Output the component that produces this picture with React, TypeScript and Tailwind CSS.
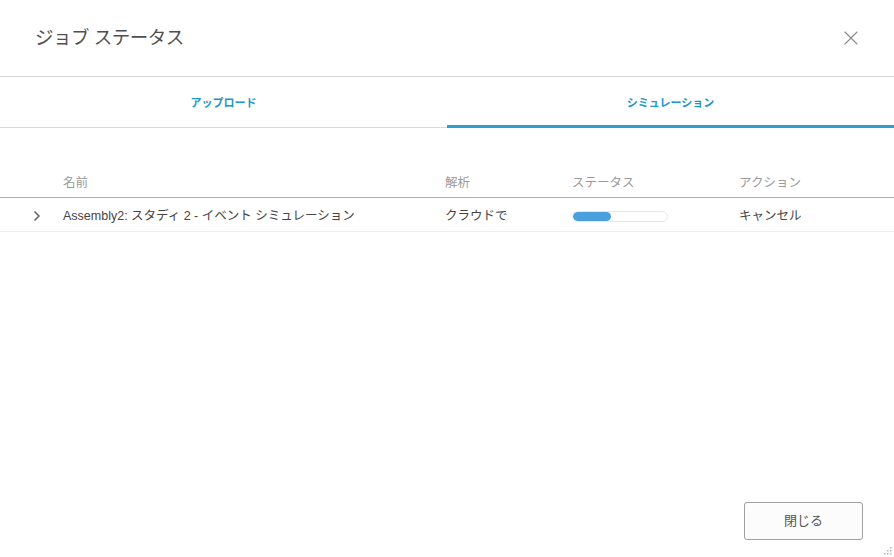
import { X, ChevronRight } from "lucide-react";

const font = { fontFamily: '"Liberation Sans", "Noto Sans CJK JP", sans-serif' };

interface Job {
  name: string;
  analysis: string;
  progress: number;
  action: string;
}

const jobs: Job[] = [
  {
    name: "Assembly2: スタディ 2 - イベント シミュレーション",
    analysis: "クラウドで",
    progress: 40,
    action: "キャンセル",
  },
];

export default function App() {
  return (
    <div className="w-[894px] h-[557px] bg-white flex flex-col relative overflow-hidden" style={font}>
      <div className="h-[77px] flex items-center justify-between pl-[35px] pr-[31px] border-b border-[#d4d4d4]">
        <h1 className="text-[18.5px] text-[#505050] tracking-[-0.5px]">ジョブ ステータス</h1>
        <button className="text-[#8a8a8a]">
          <X className="w-[24px] h-[24px]" strokeWidth={1.1} />
        </button>
      </div>

      <div className="flex h-[51px]">
        <div className="flex-1 flex items-center justify-center border-b border-[#d8d8d8] pt-[3px] text-[11px] font-bold text-[#1b97c9]">
          アップロード
        </div>
        <div className="flex-1 flex items-center justify-center border-b-[3px] border-[#2c9fcf] pt-[4px] text-[11px] font-bold text-[#1b97c9]">
          シミュレーション
        </div>
      </div>

      <div className="mt-[43px]">
        <div className="flex h-[27px] items-center border-b border-[#b0b0b0] text-[12.5px] text-[#9a9a9a] pb-[2px]">
          <div className="w-[63px]" />
          <div className="w-[382px]">名前</div>
          <div className="w-[127px]">解析</div>
          <div className="w-[167px]">ステータス</div>
          <div>アクション</div>
        </div>
        {jobs.map((job) => (
          <div key={job.name} className="flex h-[34px] items-center border-b border-[#efefef] pt-[3px] text-[12.5px] text-[#444]">
            <div className="w-[63px] flex justify-start pl-[29px] text-[#666]">
              <ChevronRight className="w-[16px] h-[16px]" strokeWidth={2.5} />
            </div>
            <div className="w-[382px]">{job.name}</div>
            <div className="w-[127px]">{job.analysis}</div>
            <div className="w-[167px]">
              <div className="w-[96px] h-[11px] rounded-full border border-[#e6e6e6] bg-white overflow-hidden">
                <div className="h-full rounded-full bg-[#4a9fdc]" style={{ width: `${job.progress}%` }} />
              </div>
            </div>
            <div>{job.action}</div>
          </div>
        ))}
      </div>

      <div className="flex-1" />

      <div className="flex justify-end pr-[31px] pb-[17px]">
        <button className="w-[119px] h-[38px] border border-[#a0a0a0] rounded-[3px] bg-[#fcfcfc] text-[13px] text-[#555]">
          閉じる
        </button>
      </div>

      <svg className="absolute right-[2px] bottom-[2px]" width="10" height="10" viewBox="0 0 10 10">
        <g fill="#b8b8b8">
          <rect x="8" y="2" width="1.5" height="1.5" />
          <rect x="5" y="5" width="1.5" height="1.5" />
          <rect x="8" y="5" width="1.5" height="1.5" />
          <rect x="2" y="8" width="1.5" height="1.5" />
          <rect x="5" y="8" width="1.5" height="1.5" />
          <rect x="8" y="8" width="1.5" height="1.5" />
        </g>
      </svg>
    </div>
  );
}
